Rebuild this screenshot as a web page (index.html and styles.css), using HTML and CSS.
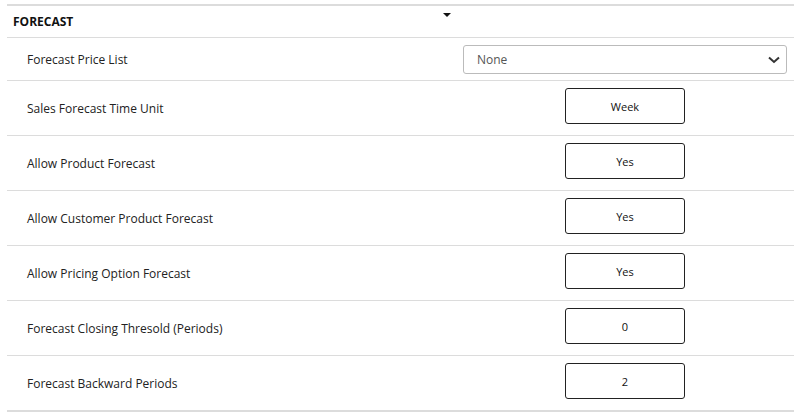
FILE: index.html
```html
<!DOCTYPE html>
<html>
<head>
<meta charset="utf-8">
<link rel="stylesheet" href="styles.css">
</head>
<body>
<div class="panel">
  <div class="panel-head">
    <div class="title">FORECAST</div>
    <div class="caret"></div>
  </div>
  <div class="row row-first">
    <div class="label">Forecast Price List</div>
    <div class="value">
      <div class="select">
        <span>None</span>
        <svg class="chev" width="14" height="8" viewBox="0 0 14 8"><path d="M2 1.5 L7 6 L12 1.5" fill="none" stroke="#333" stroke-width="2"/></svg>
      </div>
    </div>
  </div>
  <div class="row">
    <div class="label">Sales Forecast Time Unit</div>
    <div class="value"><div class="box">Week</div></div>
  </div>
  <div class="row">
    <div class="label">Allow Product Forecast</div>
    <div class="value"><div class="box">Yes</div></div>
  </div>
  <div class="row">
    <div class="label">Allow Customer Product Forecast</div>
    <div class="value"><div class="box">Yes</div></div>
  </div>
  <div class="row">
    <div class="label">Allow Pricing Option Forecast</div>
    <div class="value"><div class="box">Yes</div></div>
  </div>
  <div class="row">
    <div class="label">Forecast Closing Thresold (Periods)</div>
    <div class="value"><div class="box">0</div></div>
  </div>
  <div class="row row-last">
    <div class="label">Forecast Backward Periods</div>
    <div class="value"><div class="box">2</div></div>
  </div>
</div>
</body>
</html>
```
FILE: styles.css
```css
html, body {
  margin: 0;
  padding: 0;
  background: #fff;
}
body {
  font-family: "Open Sans", "Segoe UI", sans-serif;
  font-size: 12px;
  color: #222;
}
.panel {
  margin: 4px 0 0 7px;
  width: 787px;
  border-top: 2px solid #dcdcdc;
  border-bottom: 2px solid #dcdcdc;
}
.panel-head {
  display: grid;
  grid-template-columns: 436px 8px;
  height: 31px;
  border-bottom: 1px solid #dcdcdc;
}
.title {
  font-weight: bold;
  font-size: 12px;
  color: #111;
  padding-left: 6px;
  line-height: 31px;
}
.caret {
  margin-top: 7px;
  width: 0;
  height: 0;
  border-left: 4px solid transparent;
  border-right: 4px solid transparent;
  border-top: 4px solid #111;
}
.row {
  display: grid;
  grid-template-columns: 456px 324px;
  height: 54px;
  border-bottom: 1px solid #dcdcdc;
  align-items: center;
}
.row-last {
  border-bottom: none;
}
.row-first {
  height: 42px;
}
.label {
  padding-left: 20px;
  color: #222;
}
.value {
  display: flex;
  justify-content: center;
}
.select {
  width: 100%;
  box-sizing: border-box;
  height: 29px;
  border: 1px solid #bbb;
  border-radius: 3px;
  display: flex;
  align-items: center;
  justify-content: space-between;
  padding: 1px 5px 0 13px;
  color: #555;
}
.chev {
  display: block;
}
.box {
  width: 120px;
  height: 36px;
  box-sizing: border-box;
  border: 1px solid #222;
  border-radius: 3px;
  display: flex;
  align-items: center;
  justify-content: center;
  color: #111;
  font-size: 11px;
  margin-bottom: 4px;
}
```
